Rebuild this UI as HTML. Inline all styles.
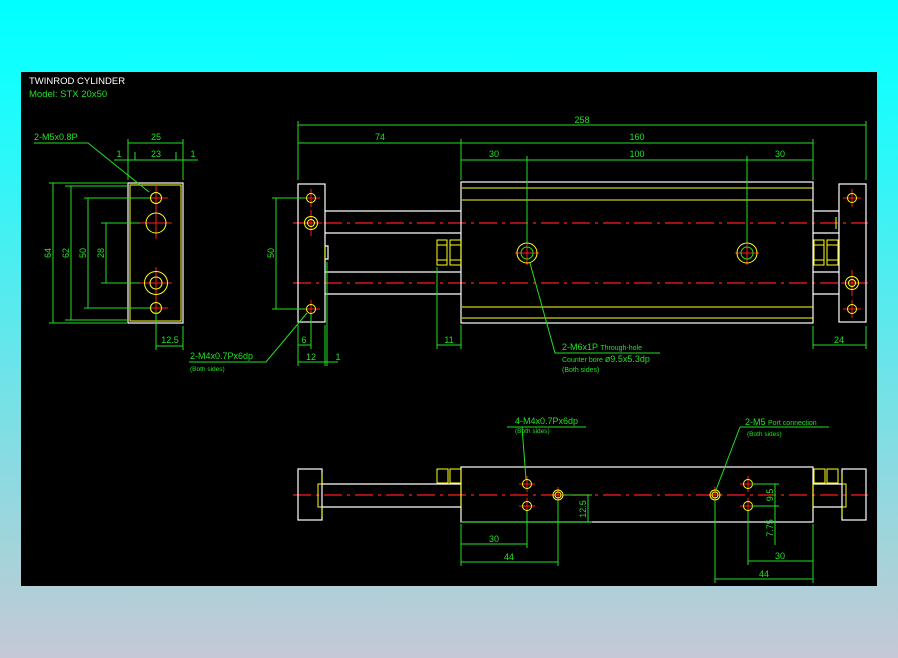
<!DOCTYPE html>
<html><head><meta charset="utf-8"><style>
html,body{margin:0;padding:0}
body{width:898px;height:658px;background:linear-gradient(#00ffff 0%,#12ffff 11%,#aed0d8 89%,#c5c8d7 100%);position:relative;overflow:hidden}
svg{position:absolute;left:0;top:0}
text{font-family:"Liberation Sans",sans-serif;fill:#22e022}
</style></head><body>
<svg width="898" height="658" viewBox="0 0 898 658">
<rect x="21" y="72" width="856" height="514" fill="#000"/>
<text x="29" y="84" font-size="9.5" style="fill:#fff">TWINROD CYLINDER</text>
<text x="29" y="97" font-size="9.5">Model: STX 20x50</text>

<g stroke="#ff1a1a" stroke-width="1.2" stroke-dasharray="18,5,3,5" fill="none">
<line x1="293" y1="223" x2="868" y2="223"/>
<line x1="293" y1="283" x2="868" y2="283"/>
<line x1="293" y1="495" x2="868" y2="495"/>
</g>
<g stroke="#ff1a1a" stroke-width="1" fill="none">
<path d="M144 198h24M156 186v24M140 223h32M156 207v32M140 283h32M156 267v32M144 308h24M156 296v24"/>
<path d="M302 198h18M311 189v18M300 223h22M311 210v26M302 309h18M311 300v18"/>
<path d="M515 253h24M527 241v24M735 253h24M747 241v24"/>
<path d="M843 198h18M852 189v18M841 283h22M852 270v26M843 309h18M852 300v18"/>
<path d="M519 484h16M527 476v16M519 506h16M527 498v16M550 495h16M558 487v16M707 495h16M715 487v16M740 484h16M748 476v16M740 506h16M748 498v16"/>
</g>

<!-- white outlines -->
<g stroke="#fff" stroke-width="1.2" fill="none">
<path d="M128 183H183v8h2v200" style="display:none"/>
<rect x="128" y="183" width="55" height="140"/>
<rect x="298" y="184" width="27" height="138"/>
<rect x="839" y="184" width="27" height="138"/>
<path d="M325 211H461M325 233H461M325 272H461M325 294H461"/>
<path d="M813 211H839M813 233H839M813 272H839M813 294H839"/>
<rect x="461" y="182" width="352" height="141"/>
<path d="M325 246h3v13h-3"/>
<rect x="298" y="469" width="24" height="51"/>
<rect x="842" y="469" width="24" height="51"/>
<rect x="461" y="467" width="352" height="55"/>
<path d="M322 484H461M322 507H461M813 484H842M813 507H842"/>
</g>
<!-- yellow -->
<g stroke="#ffff1a" stroke-width="1" fill="none">
<rect x="130" y="185" width="51" height="136"/>
<path d="M462 188H813M462 200H813M462 307H813M462 318H813"/>
<circle cx="156" cy="198" r="5.5"/><circle cx="156" cy="223" r="10"/><circle cx="156" cy="283" r="11.5"/><circle cx="156" cy="283" r="6"/><circle cx="156" cy="308" r="5.5"/>
<circle cx="311" cy="198" r="4.5"/><circle cx="311" cy="223" r="6.5"/><circle cx="311" cy="223" r="3.5"/><circle cx="311" cy="309" r="4.5"/>
<circle cx="527" cy="253" r="10"/><circle cx="747" cy="253" r="10"/>
<circle cx="852" cy="198" r="4.5"/><circle cx="852" cy="283" r="6.5"/><circle cx="852" cy="283" r="3.5"/><circle cx="852" cy="309" r="4.5"/>
<rect x="437" y="240" width="10" height="25"/><rect x="450" y="240" width="11" height="25"/><path d="M437 245h10M437 260h10M450 245h11M450 260h11"/>
<rect x="814" y="240" width="10" height="25"/><rect x="827" y="240" width="11" height="25"/><path d="M814 245h10M814 260h10M827 245h11M827 260h11"/>
<path d="M325 246v13M836 217v12"/>
<rect x="437" y="469" width="11" height="14"/><rect x="450" y="469" width="11" height="14"/>
<rect x="814" y="469" width="11" height="14"/><rect x="827" y="469" width="11" height="14"/>
<path d="M322 473v11h-4v23h4v10M842 473v11h4v23h-4v10M461 484v23M813 484v23"/>
<circle cx="527" cy="484" r="4.5"/><circle cx="527" cy="506" r="4.5"/><circle cx="558" cy="495" r="5"/><circle cx="558" cy="495" r="3"/>
<circle cx="715" cy="495" r="5"/><circle cx="715" cy="495" r="3"/><circle cx="748" cy="484" r="4.5"/><circle cx="748" cy="506" r="4.5"/>
</g>
<!-- green dims -->
<g stroke="#22e022" stroke-width="1" fill="none">
<circle cx="527" cy="253" r="6"/><circle cx="747" cy="253" r="6"/>
<path d="M128 180V139M183 180V139M128 143H183M183 160V152M176 160V152M135 160V152M114 160H135M176 160H198M135 160h41"/>
<path d="M49 183H128M65 186H128M84 198H150M101 223H140M84 308H150M101 283H140M65 320H128M49 323H128"/>
<path d="M53 183V323M71 186V320M88 198V308M106 223V283"/>
<path d="M156 312V350M183 326V350M156 346H183"/>
<path d="M34 143H88L149 192"/>
<path d="M298 180V121M866 180V121M461 180V139M813 180V139M527 243V156M747 243V156"/>
<path d="M298 125H866M298 143H813M461 160H813"/>
<path d="M272 198H306M272 309H306M276 198V309"/>
<path d="M298 325V366M311 314V349M325 325V366M327 262V366M298 345H311M298 362H338M437 267V349M461 325V349M437 345H461M813 326V349M866 326V349M813 345H866"/>
<path d="M189 362H266L307 313"/>
<path d="M530 263L555 353H660"/>
<path d="M507 427H586M522 427L526 479"/>
<path d="M740 427H829M740 427L716 490"/>
<path d="M563 495H592M461 522H592M588 495V522M752 484H779M752 506H779M775 484V545"/>
<path d="M461 524V566M527 511V548M558 500V566M461 544H527M461 562H558"/>
<path d="M715 500V583M748 511V565M813 524V583M748 561H813M715 579H813"/>
</g>
<g font-size="9" text-anchor="middle">
<text x="156" y="140">25</text><text x="156" y="157">23</text><text x="119" y="157">1</text><text x="193" y="157">1</text>
<text x="170" y="343">12.5</text>
<text transform="translate(51 253) rotate(-90)">64</text><text transform="translate(69 253) rotate(-90)">62</text><text transform="translate(86 253) rotate(-90)">50</text><text transform="translate(104 253) rotate(-90)">28</text>
<text transform="translate(274 253) rotate(-90)">50</text>
<text x="582" y="123">258</text><text x="380" y="140">74</text><text x="637" y="140">160</text>
<text x="494" y="157">30</text><text x="637" y="157">100</text><text x="780" y="157">30</text>
<text x="304" y="343">6</text><text x="311" y="360">12</text><text x="338" y="360">1</text><text x="449" y="343">11</text><text x="839" y="343">24</text>
<text x="494" y="542">30</text><text x="509" y="560">44</text><text x="780" y="559">30</text><text x="764" y="577">44</text>
<text transform="translate(586 509) rotate(-90)">12.5</text>
<text transform="translate(773 495) rotate(-90)">9.5</text>
<text transform="translate(773 528) rotate(-90)">7.75</text>
</g>
<g font-size="9">
<text x="34" y="140">2-M5x0.8P</text>
<text x="190" y="359">2-M4x0.7Px6dp</text>
<text x="190" y="371" font-size="6.5">(Both sides)</text>
<text x="562" y="350">2-M6x1P <tspan font-size="7">Through-hole</tspan></text>
<text x="562" y="362"><tspan font-size="7">Counter bore </tspan>ø9.5x5.3dp</text>
<text x="562" y="372" font-size="7">(Both sides)</text>
<text x="515" y="424">4-M4x0.7Px6dp</text>
<text x="515" y="433" font-size="6.5">(Both sides)</text>
<text x="745" y="425">2-M5 <tspan font-size="7">Port connection</tspan></text>
<text x="747" y="436" font-size="6.5">(Both sides)</text>
</g>
</svg>
</body></html>
